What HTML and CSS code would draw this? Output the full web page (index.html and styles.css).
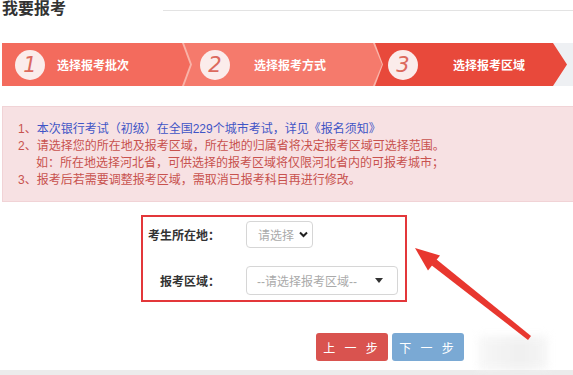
FILE: index.html
```html
<!DOCTYPE html>
<html lang="zh">
<head>
<meta charset="utf-8">
<link rel="stylesheet" href="styles.css">
</head>
<body>
<div class="page">
  <header class="head">
    <h1 class="title">我要报考</h1>
    <div class="head-line"></div>
  </header>

  <nav class="steps">
    <div class="step step-1">
      <span class="num">1</span>
      <span class="label">选择报考批次</span>
    </div>
    <div class="step step-2">
      <span class="num">2</span>
      <span class="label">选择报考方式</span>
    </div>
    <div class="step step-3">
      <span class="num">3</span>
      <span class="label">选择报考区域</span>
    </div>
    <div class="steps-fill"></div>
  </nav>

  <section class="notice">
    <p class="line">1、<span class="link">本次银行考试（初级）在全国229个城市考试，详见《报名须知》</span></p>
    <p class="line">2、请选择您的所在地及报考区域，所在地的归属省将决定报考区域可选择范围。</p>
    <p class="line indent">如：所在地选择河北省，可供选择的报考区域将仅限河北省内的可报考城市；</p>
    <p class="line">3、报考后若需要调整报考区域，需取消已报考科目再进行修改。</p>
  </section>

  <section class="form">
    <div class="form-box">
      <label class="f-label">考生所在地：</label>
      <div class="select select-sm">
        <span class="ph">请选择</span>
        <svg class="chev" width="9" height="7" viewBox="0 0 9 7"><path d="M1 1.5 L4.5 5 L8 1.5" fill="none" stroke="#222" stroke-width="2"/></svg>
      </div>
      <label class="f-label">报考区域：</label>
      <div class="select select-lg">
        <span class="ph">--请选择报考区域--</span>
        <svg class="caret" width="8" height="5" viewBox="0 0 8 5"><path d="M0 0 H8 L4 5 Z" fill="#333"/></svg>
      </div>
    </div>
  </section>

  <div class="actions">
    <button class="btn btn-prev">上 一 步</button>
    <button class="btn btn-next">下 一 步</button>
  </div>

  <div class="foot"></div>

  <div class="watermark"></div>

  <svg class="arrow" width="573" height="375" viewBox="0 0 573 375">
    <path d="M431.5 265.3 L436.3 259.2 L531 336 L528 340 Z" fill="#e8372f"/>
    <path d="M415 248 L440 255.5 L428 270.5 Z" fill="#e8372f"/>
  </svg>
</div>
</body>
</html>
```

FILE: styles.css
```css
* { box-sizing: border-box; }
html, body { margin: 0; padding: 0; background: #fff; }
body {
  font-family: "Liberation Sans", "Noto Sans CJK SC", sans-serif;
  font-size: 12px;
  color: #333;
}
.page {
  position: relative;
  width: 573px;
  height: 375px;
  overflow: hidden;
}
.head {
  display: flex;
  align-items: center;
  height: 20px;
  padding-left: 2px;
}
.title {
  margin: 0;
  font-size: 16px;
  font-weight: bold;
  color: #333;
  line-height: 20px;
  margin-top: -2px;
}
.head-line {
  flex: 1;
  height: 1px;
  background: #e3e3e3;
  margin-left: 97px;
  margin-top: 0;
}

.steps {
  display: flex;
  height: 43px;
  margin: 23px 0 0 2px;
  background: #f9b3a8;
}
.step {
  position: relative;
  z-index: 1;
  display: flex;
  align-items: center;
  height: 43px;
  color: #fff;
  font-weight: bold;
  font-size: 12px;
}
.step-1 {
  width: 188px;
  padding-left: 13px;
  background: #f36b5d;
  clip-path: polygon(0 0, calc(100% - 8px) 0, 100% 50%, calc(100% - 8px) 100%, 0 100%);
}
.step-2 {
  width: 198px;
  margin-left: -6px;
  padding-left: 16px;
  background: #f57a6c;
  clip-path: polygon(0 0, calc(100% - 9px) 0, 100% 50%, calc(100% - 9px) 100%, 0 100%, 8px 50%);
}
.step-3 {
  width: 192px;
  margin-left: -7px;
  padding-left: 13px;
  background: #e8493b;
  clip-path: polygon(0 0, calc(100% - 14px) 0, 100% 50%, calc(100% - 14px) 100%, 0 100%, 8px 50%);
}
.steps-fill {
  flex: 1;
  margin-left: -14px;
  background: #eef0f3;
}
.num {
  width: 30px;
  height: 30px;
  border-radius: 50%;
  background: #fbeceb;
  color: #dc6a5e;
  font-family: "DejaVu Sans", sans-serif;
  font-style: italic;
  font-weight: normal;
  font-size: 21px;
  line-height: 30px;
  text-align: center;
  flex: none;
}
.step-1 .label { margin-left: 12px; }
.step-2 .label { margin-left: 24px; }
.step-3 .label { margin-left: 35px; }

.notice {
  margin: 20px 0 0 2px;
  padding: 14px 10px 12px 15px;
  background: #f7e1e3;
  border: 1px solid #f1d3d6;
  border-right: none;
  color: #c8524e;
}
.line {
  margin: 0;
  line-height: 17px;
  font-size: 12px;
  white-space: nowrap;
}
.indent { padding-left: 18px; }
.link { color: #3f55c6; }

.form {
  margin-top: 13px;
  padding-left: 141px;
}
.form-box {
  width: 266px;
  border: 2px solid #e3373a;
  padding: 4px 7px 5px 5px;
  display: grid;
  grid-template-columns: 72px auto;
  column-gap: 26px;
  row-gap: 18px;
  align-items: center;
  justify-items: start;
}
.f-label {
  justify-self: end;
  font-weight: bold;
  color: #333;
  font-size: 12px;
  white-space: nowrap;
}
.select {
  display: flex;
  align-items: center;
  background: #fff;
  border: 1px solid #d6d6d6;
  border-radius: 4px;
  color: #aaa;
  font-size: 12px;
}
.select-sm {
  width: 67px;
  height: 27px;
  padding-left: 11px;
}
.select-sm .chev { margin-left: 5px; }
.select-lg {
  width: 152px;
  height: 29px;
  padding-left: 10px;
}
.select-lg .caret { margin-left: 18px; }

.actions {
  display: flex;
  gap: 4px;
  margin-top: 31px;
  padding-left: 316px;
}
.btn {
  width: 72px;
  height: 28px;
  border: none;
  border-radius: 3px;
  color: #fff;
  font-family: "Liberation Sans", "Noto Sans CJK SC", sans-serif;
  font-size: 12px;
  letter-spacing: 3px;
  padding: 0;
}
.btn-prev { background: #d9534f; }
.btn-next { background: #7aa9d4; }

.foot {
  margin-top: 9px;
  height: 8px;
  background: #ececec;
}

.watermark {
  position: absolute;
  left: 478px;
  top: 336px;
  width: 70px;
  height: 34px;
  background: linear-gradient(90deg, #f6f6f6, #ececec 60%, #f4f4f4);
  filter: blur(4px);
  opacity: 0.8;
}
.arrow {
  position: absolute;
  left: 0;
  top: 0;
  pointer-events: none;
}
```
